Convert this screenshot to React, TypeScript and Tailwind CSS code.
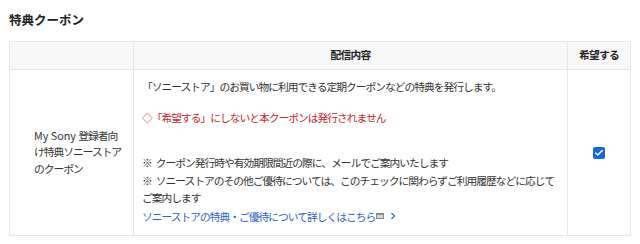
import { Check } from "lucide-react";

const font = { fontFamily: '"Noto Sans CJK JP", "Noto Sans", sans-serif' };

export default function App() {
  return (
    <div className="w-[640px] h-[244px] bg-white text-[#333] px-[9px] pt-[10px]" style={font}>
      <h2 className="text-[12.5px] font-bold leading-[20px] tracking-[0px] text-[#222]">特典クーポン</h2>

      <table className="mt-[11px] w-[621px] border-collapse table-fixed">
        <colgroup>
          <col className="w-[124px]" />
          <col className="w-[434px]" />
          <col className="w-[63px]" />
        </colgroup>
        <thead>
          <tr className="h-[28px] bg-[#f8f8f9] text-[10.75px] font-bold tracking-[-0.7px] text-[#222]">
            <th className="border border-[#e6e6e6]" />
            <th className="border border-[#e6e6e6] font-bold">配信内容</th>
            <th className="border border-[#e6e6e6] font-bold">希望する</th>
          </tr>
        </thead>
        <tbody>
          <tr className="text-[10.75px] tracking-[-1px] leading-[17.5px]">
            <td className="border border-[#e6e6e6] pl-[24px] pr-[6px] align-middle leading-[16.5px]">
              <span className="tracking-[0px]">My Sony </span>登録者向
              <br />
              け特典ソニーストア
              <br />
              のクーポン
            </td>
            <td className="border border-[#e6e6e6] pl-[8px] pr-[4px] pt-[8px] pb-[10px] whitespace-nowrap">
              <p>「ソニーストア」のお買い物に利用できる定期クーポンなどの特典を発行します。</p>
              <p className="mt-[13px] text-[#c9262b]">◇「希望する」にしないと本クーポンは発行されません</p>
              <p className="mt-[28px]">
                ※<span className="inline-block w-[4px]" />クーポン発行時や有効期限間近の際に、メールでご案内いたします
              </p>
              <p>
                ※<span className="inline-block w-[4px]" />ソニーストアのその他ご優待については、このチェックに関わらずご利用履歴などに応じて
                <br />
                ご案内します
              </p>
              <a className="mt-[1px] flex items-center text-[#2f62c0]" href="#">
                ソニーストアの特典・ご優待について詳しくはこちら
                <svg width="8" height="6" viewBox="0 0 8 6" className="ml-[1px]">
                  <rect x="0.5" y="0.5" width="7" height="5" fill="#d6d6d6" stroke="#8a8a8a" />
                  <rect x="0.5" y="0.5" width="7" height="1.5" fill="#8a8a8a" />
                </svg>
                <svg width="6" height="8" viewBox="0 0 6 8" className="ml-[6px]">
                  <path d="M1.5 1 L4.5 4 L1.5 7" fill="none" stroke="#2f62c0" strokeWidth="1.1" />
                </svg>
              </a>
            </td>
            <td className="border border-[#e6e6e6] align-middle">
              <div className="mx-auto flex h-[12px] w-[12px] items-center justify-center rounded-[2px] bg-[#1768d8]">
                <Check size={10} strokeWidth={3.5} color="white" />
              </div>
            </td>
          </tr>
        </tbody>
      </table>
    </div>
  );
}
